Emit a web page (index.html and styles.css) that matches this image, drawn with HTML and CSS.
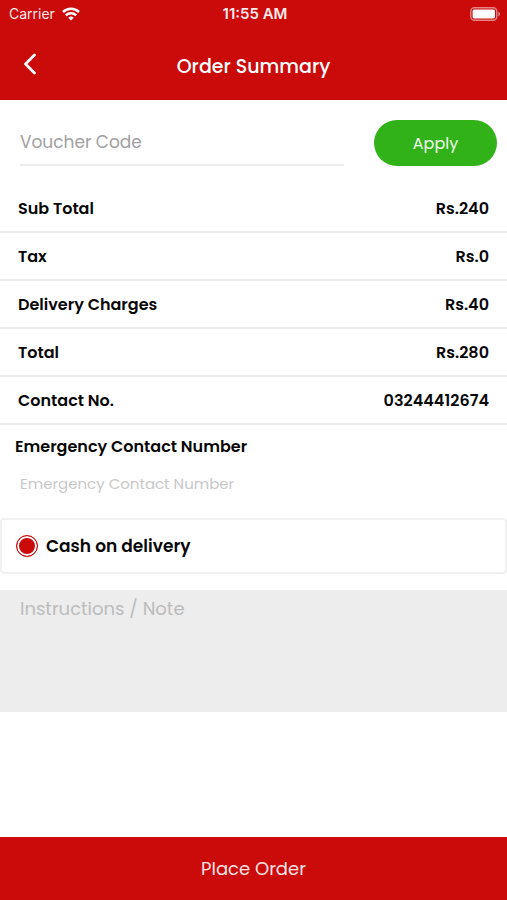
FILE: index.html
```html
<!DOCTYPE html>
<html lang="en">
<head>
  <meta charset="utf-8">
  <meta name="viewport" content="width=device-width, initial-scale=1">
  <title>Order Summary</title>
  <link rel="stylesheet" href="styles.css">
</head>
<body>
  <div class="screen">
    <header class="header">
      <div class="status">
        <div class="carrier">
          <span>Carrier</span>
          <svg class="wifi" viewBox="0 0 18 14" aria-hidden="true">
            <path d="M1 5a11.4 11.4 0 0 1 16 0M3.8 8.3a7.4 7.4 0 0 1 10.4 0" fill="none" stroke="currentColor" stroke-width="2.5"/>
            <path d="M9 13.6 6.2 10.8a4 4 0 0 1 5.6 0Z" fill="currentColor"/>
          </svg>
        </div>
        <span class="clock">11:55 AM</span>
        <svg class="battery" viewBox="0 0 31 14" aria-hidden="true">
          <rect x=".8" y=".8" width="26" height="12.4" rx="3.6" fill="none" stroke="currentColor" stroke-width="1.4" opacity=".5"/>
          <rect x="2.6" y="2.6" width="22.4" height="8.8" rx="1.6" fill="currentColor"/>
          <path d="M28.3 4.8v4.4q2-.7 2-2.2t-2-2.2Z" fill="currentColor" opacity=".5"/>
        </svg>
      </div>
      <div class="titlebar">
        <button class="back" type="button" aria-label="Back">
          <svg viewBox="0 0 14 22" aria-hidden="true">
            <path d="M11.5 2 2.5 11l9 9" fill="none" stroke="currentColor" stroke-width="2.8" stroke-linecap="round" stroke-linejoin="round"/>
          </svg>
        </button>
        <h1 class="title">Order Summary</h1>
      </div>
    </header>

    <main class="content">
      <form class="voucher">
        <input class="voucher-input" type="text" placeholder="Voucher Code" aria-label="Voucher Code">
        <button class="apply" type="button">Apply</button>
      </form>

      <dl class="totals">
        <div class="row"><dt>Sub Total</dt><dd>Rs.240</dd></div>
        <div class="row"><dt>Tax</dt><dd>Rs.0</dd></div>
        <div class="row"><dt>Delivery Charges</dt><dd>Rs.40</dd></div>
        <div class="row"><dt>Total</dt><dd>Rs.280</dd></div>
        <div class="row"><dt>Contact No.</dt><dd>03244412674</dd></div>
      </dl>

      <div class="emergency">
        <label class="emergency-label" for="emergency">Emergency Contact Number</label>
        <input class="emergency-input" id="emergency" type="tel" placeholder="Emergency Contact Number">
      </div>

      <label class="payment">
        <input class="radio" type="radio" name="payment" checked>
        <span>Cash on delivery</span>
      </label>

      <textarea class="note" placeholder="Instructions / Note" aria-label="Instructions / Note"></textarea>
    </main>

    <button class="place-order" type="button">Place Order</button>
  </div>
</body>
</html>
```
FILE: styles.css
```css
* {
  box-sizing: border-box;
}

body {
  margin: 0;
  background: #fff;
  color: #080808;
  font-family: Poppins, Inter, sans-serif;
}

button,
input,
textarea {
  margin: 0;
  padding: 0;
  border: 0;
  border-radius: 0;
  background: none;
  color: inherit;
  font: inherit;
}

.screen {
  display: flex;
  flex-direction: column;
  min-height: 100vh;
}

.header {
  background: #cb0a0a;
  color: #fff;
}

.status {
  display: grid;
  grid-template-columns: 1fr auto 1fr;
  align-items: center;
  height: 27px;
  padding: 0 6px 0 9px;
  color: #ffe9e9;
  font-family: Inter, sans-serif;
  font-size: 14px;
}

.carrier {
  display: flex;
  align-items: center;
  gap: 7px;
}

.wifi {
  width: 18px;
  height: 14px;
  color: #fff;
}

.clock {
  font-size: 15px;
  font-weight: 600;
}

.battery {
  justify-self: end;
  width: 31px;
  height: 14px;
  color: #fff;
}

.titlebar {
  display: grid;
  grid-template-columns: 60px 1fr 60px;
  align-items: center;
  height: 73px;
}

.back {
  display: flex;
  justify-content: center;
}

.back svg {
  width: 14px;
  height: 22px;
}

.title {
  margin: 0;
  padding-top: 6px;
  font-size: 19px;
  font-weight: 500;
  line-height: 28px;
  text-align: center;
}

.voucher {
  display: flex;
  align-items: center;
  gap: 30px;
  padding: 20px 10px 19px 20px;
}

.voucher-input {
  flex: 1;
  min-width: 0;
  height: 46px;
  border-bottom: 2px solid #ececec;
  font-size: 17px;
}

.voucher-input::placeholder {
  color: #a0a0a0;
}

.apply {
  width: 123px;
  height: 46px;
  border-radius: 23px;
  background: #30b218;
  color: #f1ffef;
  font-size: 16px;
}

.totals {
  margin: 0;
}

.row {
  display: flex;
  align-items: center;
  justify-content: space-between;
  height: 48px;
  padding: 0 18px;
  border-bottom: 2px solid #ebebeb;
  font-size: 16px;
  font-weight: 600;
}

.row dd {
  margin: 0;
}

.emergency {
  display: flex;
  flex-direction: column;
  padding: 10px 15px 15px;
}

.emergency-label {
  font-size: 16px;
  font-weight: 600;
  line-height: 24px;
}

.emergency-input {
  height: 44px;
  padding: 4px 5px 0;
  font-size: 15px;
}

.emergency-input::placeholder {
  color: #c8c8c8;
}

.payment {
  display: flex;
  align-items: center;
  gap: 8px;
  height: 56px;
  padding: 0 14px;
  border: 2px solid #f1f1f1;
  border-radius: 4px;
  font-size: 17px;
  font-weight: 600;
}

.radio {
  appearance: none;
  width: 22px;
  height: 22px;
  border: 1px solid #cb0a0a;
  border-radius: 50%;
  background: #cb0a0a;
  box-shadow: inset 0 0 0 2px #fff;
}

.note {
  display: block;
  width: 100%;
  height: 122px;
  margin-top: 16px;
  padding: 6px 20px;
  background: #ededed;
  font-size: 18px;
  line-height: 26px;
  resize: none;
}

.note::placeholder {
  color: #bcbcbc;
}

.place-order {
  height: 63px;
  margin-top: auto;
  background: #cb0a0a;
  color: #ffe4e4;
  font-size: 18px;
}
```
